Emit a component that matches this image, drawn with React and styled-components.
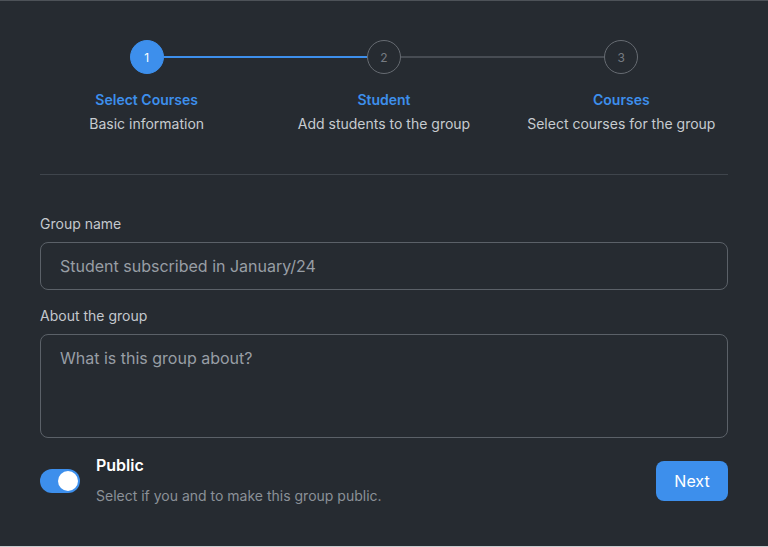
import React, { useState } from 'react';
import styled, { createGlobalStyle } from 'styled-components';

const GlobalStyle = createGlobalStyle`
  html, body {
    margin: 0;
    padding: 0;
    background: #c9cbce;
  }
  * {
    box-sizing: border-box;
  }
`;

const steps = [
  { n: 1, title: 'Select Courses', sub: 'Basic information' },
  { n: 2, title: 'Student', sub: 'Add students to the group' },
  { n: 3, title: 'Courses', sub: 'Select courses for the group' },
];

function App() {
  const [isPublic, setIsPublic] = useState(true);
  const current = 1;

  return (
    <>
      <GlobalStyle />
      <Card>
        <Stepper>
          {steps.map((step, i) => (
            <Step key={step.n}>
              <Track>
                {/* segment coming in from the previous step */}
                <Line $active={step.n - 1 <= current} $hidden={i === 0} />
                <Circle $active={step.n <= current}>{step.n}</Circle>
                <Line $active={step.n <= current} $hidden={i === steps.length - 1} />
              </Track>
              <StepTitle>{step.title}</StepTitle>
              <StepSub>{step.sub}</StepSub>
            </Step>
          ))}
        </Stepper>

        <Divider />

        <Form>
          <Field>
            <Label>Group name</Label>
            <Input type="text" placeholder="Student subscribed in January/24" />
          </Field>
          <Field>
            <Label>About the group</Label>
            <TextArea placeholder="What is this group about?" />
          </Field>

          <Footer>
            <PublicRow>
              <Toggle $on={isPublic} onClick={() => setIsPublic(!isPublic)}>
                <Knob $on={isPublic} />
              </Toggle>
              <PublicText>
                <PublicTitle>Public</PublicTitle>
                <PublicDesc>Select if you and to make this group public.</PublicDesc>
              </PublicText>
            </PublicRow>
            <NextButton>Next</NextButton>
          </Footer>
        </Form>
      </Card>
    </>
  );
}

const Card = styled.div`
  height: 546px;
  background: #262b31;
  border-top: 1px solid #4d5258;
  padding: 39px 40px 0;
  font-family: Inter, 'Noto Sans', sans-serif;
`;

const Stepper = styled.div`
  display: grid;
  grid-template-columns: repeat(3, 1fr);
  margin: 0 -12px;
`;

const Step = styled.div`
  display: flex;
  flex-direction: column;
  align-items: center;
`;

const Track = styled.div`
  display: flex;
  align-items: center;
  width: 100%;
  height: 34px;
`;

const Line = styled.div`
  flex: 1;
  height: 2px;
  background: ${(p) => (p.$hidden ? 'transparent' : p.$active ? '#3d8fec' : '#474c53')};
`;

const Circle = styled.div`
  width: 34px;
  height: 34px;
  border-radius: 50%;
  display: flex;
  align-items: center;
  justify-content: center;
  font-size: 12px;
  background: ${(p) => (p.$active ? '#3d8fec' : 'transparent')};
  border: 1px solid ${(p) => (p.$active ? '#3d8fec' : '#666b72')};
  color: ${(p) => (p.$active ? '#ffffff' : '#767b82')};
`;

const StepTitle = styled.div`
  margin-top: 16px;
  font-size: 14px;
  line-height: 20px;
  font-weight: 600;
  color: #3d8fec;
`;

const StepSub = styled.div`
  margin-top: 4px;
  font-size: 14px;
  line-height: 20px;
  color: #c7cbd0;
`;

const Divider = styled.hr`
  margin: 40px 0 0;
  border: none;
  border-top: 1px solid #3f454c;
`;

const Form = styled.div`
  display: flex;
  flex-direction: column;
  gap: 16px;
  padding-top: 39px;
`;

const Field = styled.div`
  display: flex;
  flex-direction: column;
  gap: 8px;
`;

const Label = styled.label`
  font-size: 14px;
  line-height: 20px;
  color: #c4c8cd;
`;

const Input = styled.input`
  height: 48px;
  padding: 0 19px;
  border: 1px solid #5b6168;
  border-radius: 8px;
  background: transparent;
  font-family: inherit;
  font-size: 16px;
  color: #e5e7ea;
  outline: none;

  &::placeholder {
    color: #989ea5;
  }
`;

const TextArea = styled.textarea`
  height: 104px;
  padding: 12px 19px;
  border: 1px solid #5b6168;
  border-radius: 8px;
  background: transparent;
  font-family: inherit;
  font-size: 16px;
  line-height: 22px;
  color: #e5e7ea;
  resize: none;
  outline: none;

  &::placeholder {
    color: #989ea5;
  }
`;

const Footer = styled.div`
  display: flex;
  align-items: center;
  justify-content: space-between;
  margin-top: 1px;
`;

const PublicRow = styled.div`
  display: flex;
  align-items: center;
  gap: 16px;
`;

const Toggle = styled.div`
  width: 40px;
  height: 24px;
  border-radius: 12px;
  padding: 2px;
  display: flex;
  justify-content: ${(p) => (p.$on ? 'flex-end' : 'flex-start')};
  background: ${(p) => (p.$on ? '#3d8fec' : '#474c53')};
  cursor: pointer;
`;

const Knob = styled.div`
  width: 20px;
  height: 20px;
  border-radius: 50%;
  background: #ffffff;
`;

const PublicText = styled.div`
  display: flex;
  flex-direction: column;
  gap: 11px;
`;

const PublicTitle = styled.div`
  font-size: 16px;
  line-height: 20px;
  font-weight: 600;
  color: #ffffff;
`;

const PublicDesc = styled.div`
  font-size: 14px;
  line-height: 20px;
  color: #8b9198;
`;

const NextButton = styled.button`
  width: 72px;
  height: 40px;
  border: none;
  border-radius: 8px;
  background: #3d8fec;
  color: #ffffff;
  font-family: inherit;
  font-size: 16px;
  cursor: pointer;
`;

export default App;
